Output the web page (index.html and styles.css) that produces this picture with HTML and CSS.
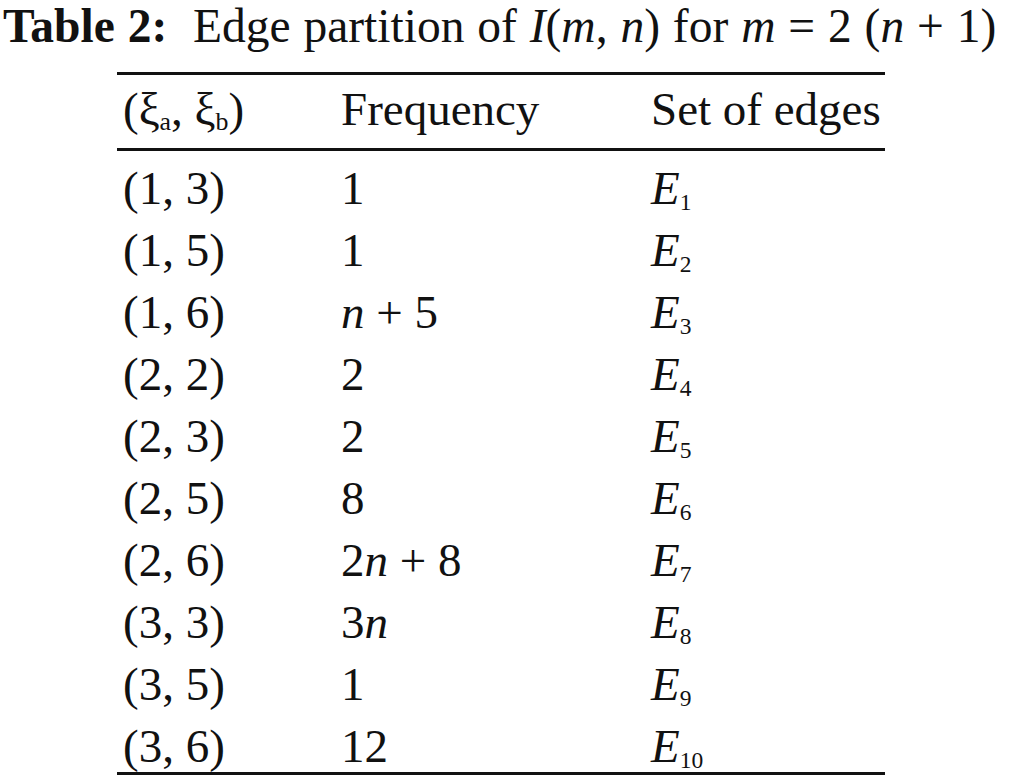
FILE: index.html
```html
<!DOCTYPE html>
<html lang="en">
<head>
    <meta charset="UTF-8">
    <title>Table 2</title>
    <link rel="stylesheet" href="styles.css">
</head>
<body>
    <div class="caption"><b>Table 2:</b>&nbsp; Edge partition of <i>I</i>(<i>m</i>, <i>n</i>) for <i>m</i> = 2 (<i>n</i> + 1)</div>

    <table class="edges">
        <thead>
            <tr>
                <th class="c1">(&xi;<sub>a</sub>, &xi;<sub>b</sub>)</th>
                <th class="c2">Frequency</th>
                <th class="c3">Set of edges</th>
            </tr>
        </thead>
        <tbody>
            <tr><td>(1, 3)</td><td>1</td><td><i>E</i><sub>1</sub></td></tr>
            <tr><td>(1, 5)</td><td>1</td><td><i>E</i><sub>2</sub></td></tr>
            <tr><td>(1, 6)</td><td><i>n</i> + 5</td><td><i>E</i><sub>3</sub></td></tr>
            <tr><td>(2, 2)</td><td>2</td><td><i>E</i><sub>4</sub></td></tr>
            <tr><td>(2, 3)</td><td>2</td><td><i>E</i><sub>5</sub></td></tr>
            <tr><td>(2, 5)</td><td>8</td><td><i>E</i><sub>6</sub></td></tr>
            <tr><td>(2, 6)</td><td>2<i>n</i> + 8</td><td><i>E</i><sub>7</sub></td></tr>
            <tr><td>(3, 3)</td><td>3<i>n</i></td><td><i>E</i><sub>8</sub></td></tr>
            <tr><td>(3, 5)</td><td>1</td><td><i>E</i><sub>9</sub></td></tr>
            <tr><td>(3, 6)</td><td>12</td><td><i>E</i><sub>10</sub></td></tr>
        </tbody>
    </table>
</body>
</html>
```

FILE: styles.css
```css
body {
    margin: 0;
    background-color: #ffffff;
    color: #111111;
    font-family: "Liberation Serif", "Times New Roman", serif;
}

.caption {
    font-size: 47.5px;
    line-height: 53px;
    word-spacing: 1px;
    padding: 0 0 0 3px;
    white-space: nowrap;
}

.edges {
    margin: 19px 0 0 117px;
    width: 768px;
    border-collapse: collapse;
    font-family: "Liberation Serif", serif;
    font-size: 47px;
    border-top: 3px solid #111111;
    border-bottom: 3px solid #111111;
}

.edges th,
.edges td {
    text-align: left;
    font-weight: normal;
    padding: 5px 0 5px 6px;
    line-height: 52px;
    vertical-align: baseline;
}

/* header row sits between the two top rules */
.edges thead th {
    padding-top: 8px;
    padding-bottom: 13px;
    border-bottom: 3px solid #111111;
}

.edges .c1 {
    width: 212px;
}

.edges .c2 {
    width: 304px;
}

.edges tbody tr:first-child td {
    padding-top: 11px;
}

.edges tbody tr:last-child td {
    padding-bottom: 0;
}

.edges sub {
    font-size: 0.5em;
    vertical-align: -0.25em;
    line-height: 0;
}

.edges th sub {
    font-size: 0.55em;
    vertical-align: -0.2em;
}
```
